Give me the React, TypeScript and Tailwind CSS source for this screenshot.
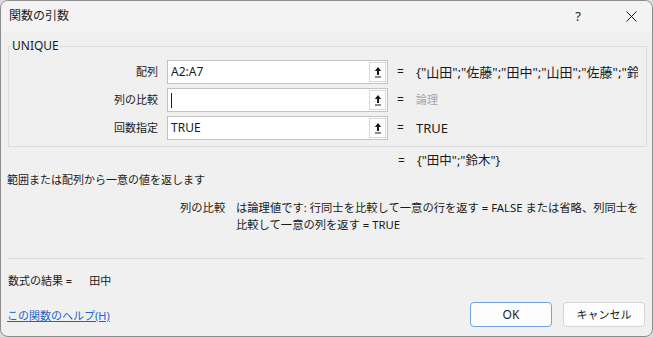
import React from 'react';

type ArgRow = {
  label: string;
  value: string;
  result: string;
  muted?: boolean;
  caret?: boolean;
};

const rows: ArgRow[] = [
  { label: '配列', value: 'A2:A7', result: '{"山田";"佐藤";"田中";"山田";"佐藤";"鈴木"}' },
  { label: '列の比較', value: '', result: '論理', muted: true, caret: true },
  { label: '回数指定', value: 'TRUE', result: 'TRUE' },
];

const RefIcon = () => (
  <svg width="8" height="12" viewBox="0 0 8 12">
    <path d="M4 1 L7.2 5 H5 V9 H3 V5 H0.8 Z" fill="#1a1a1a" />
    <rect x="1" y="10.5" width="6" height="1" fill="#1a1a1a" />
  </svg>
);

const App: React.FC = () => {
  return (
    <div className="w-[653px] h-[337px] bg-[#dcdcdc]">
      <div
        className="w-[653px] h-[337px] bg-[#f0f0f0] border border-[#8c8c8c] rounded-lg overflow-hidden text-[#1a1a1a] text-[12px] leading-4"
        style={{ fontFamily: '"Noto Sans", "Noto Sans CJK JP", sans-serif' }}
      >
        {/* title bar */}
        <div className="h-[30px] flex items-center pl-[8px] pr-[15px] bg-[#f3f3f3]">
          <span className="text-[12px]">関数の引数</span>
          <span className="ml-auto mr-[45px] text-[13px]">?</span>
          <svg width="11" height="11" viewBox="0 0 11 11">
            <path d="M0.5 0.5 L10.5 10.5 M10.5 0.5 L0.5 10.5" stroke="#1a1a1a" strokeWidth="1" />
          </svg>
        </div>

        <div className="px-[4px]">
          <fieldset className="mt-[7px] ml-[3px] mr-[1px] border border-[#dcdcdc] pt-[6px] pb-[6px]">
            <legend className="ml-[2px] px-[1px] leading-4 text-[12px]">UNIQUE</legend>
            <div className="flex flex-col gap-[4px]">
              {rows.map(r => (
                <div key={r.label} className="flex items-center h-[24px]">
                  <div className="w-[149px] text-right text-[11px]">{r.label}</div>
                  <div className="ml-[9px] w-[221px] h-[24px] flex bg-white border border-[#c2c2c2]">
                    <div className="flex-1 flex items-center pl-[3px] text-[12px]">
                      {r.caret && <span className="w-px h-[15px] bg-[#1a1a1a]" />}
                      {r.value}
                    </div>
                    <div className="w-[17px] my-[1px] mr-[1px] flex items-center justify-center border border-[#dadada] bg-white">
                      <RefIcon />
                    </div>
                  </div>
                  <span className="ml-[9px] w-[19px]">=</span>
                  <span
                    className={
                      'w-[222px] overflow-hidden whitespace-nowrap ' +
                      (r.muted ? 'text-[#a6a6a6] text-[11px]' : 'text-[13px]')
                    }
                  >
                    {r.result}
                  </span>
                </div>
              ))}
            </div>
          </fieldset>

          <div className="mt-[6px] pl-[393px] flex h-4">
            <span className="w-[19px]">=</span>
            <span className="text-[12.5px]">{'{"田中";"鈴木"}'}</span>
          </div>

          <div className="mt-[3px] ml-[2px] text-[11px]">範囲または配列から一意の値を返します</div>

          <div className="mt-[11px] ml-[175px] flex text-[11.3px] leading-[17px]">
            <div className="w-[56px] shrink-0">列の比較</div>
            <div className="whitespace-nowrap">
              は論理値です: 行同士を比較して一意の行を返す = FALSE または省略、列同士を
              <br />
              比較して一意の列を返す = TRUE
            </div>
          </div>

          <div className="mt-[25px] mx-[3px] border-t border-[#dcdcdc]" />

          <div className="mt-[14px] ml-[3px] flex h-4 text-[11px]">
            <span>数式の結果 =</span>
            <span className="ml-[17px]">田中</span>
          </div>

          <div className="mt-[13px] ml-[2px] mr-[3px] flex items-center h-[25px]">
            <a className="text-[11px] text-[#1a66cc] underline mt-[3px]">この関数のヘルプ(H)</a>
            <button className="ml-auto w-[82px] h-[25px] rounded-[4px] bg-[#fdfdfd] border border-[#6fa4dc] text-[12px]">
              OK
            </button>
            <button className="ml-[11px] w-[82px] h-[25px] rounded-[4px] bg-[#fdfdfd] border border-[#d4d4d4] text-[11px]">
              キャンセル
            </button>
          </div>
        </div>
      </div>
    </div>
  );
};

export default App;
